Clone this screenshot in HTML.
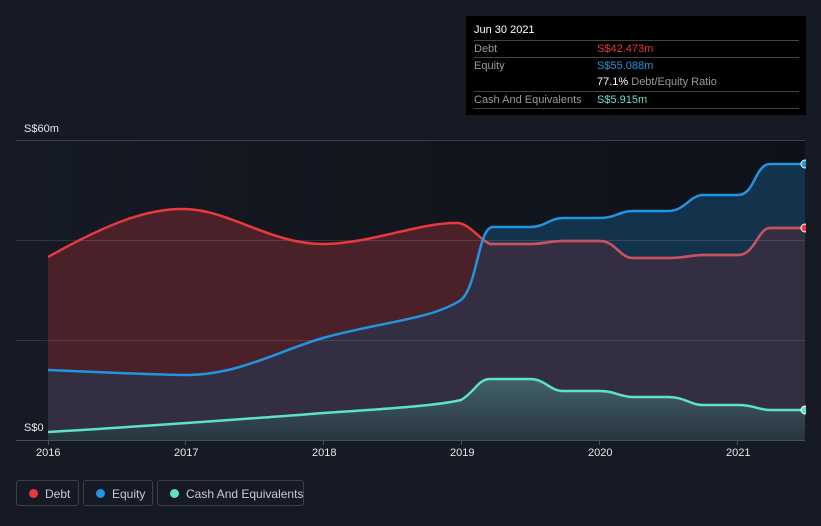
<!DOCTYPE html>
<html><head><meta charset="utf-8"><style>
body{margin:0;width:821px;height:526px;background:#151a24;font-family:"Liberation Sans",sans-serif;overflow:hidden;position:relative}
.tt{position:absolute;left:466px;top:16px;width:340px;height:99px;background:#000;color:#fff;font-size:11px}
.tt .r{position:absolute;left:8px;width:325px;border-top:1px solid #444}
.lbl{color:#9a9a9a}
.leg{position:absolute;top:480px;height:26px;border:1px solid #3a3f4a;border-radius:3px;color:#c8ccd2;font-size:12px;line-height:26px;box-sizing:border-box;white-space:nowrap}
.leg i{position:absolute;left:12px;top:8px;width:9px;height:9px;border-radius:50%}
.ax{position:absolute;color:#e8e8e8;font-size:11px}
</style></head><body>
<svg width="821" height="526" style="position:absolute;left:0;top:0">
<defs>
<linearGradient id="bg" x1="0" x2="1"><stop offset="0" stop-color="#151a24"/><stop offset="1" stop-color="#0e1118"/></linearGradient>
<linearGradient id="cg" x1="0" y1="0" x2="0" y2="1"><stop offset="0" stop-color="#44626a"/><stop offset="1" stop-color="#27343e"/></linearGradient>
<clipPath id="eq"><path d="M48,370 C120,373 160,375 185,375 C240,375 280,350 323,338 C380,322 430,320 461,300 C478,285 478,227 493,227 L530,227 C545,227 550,218 563,218 L600,218 C615,218 620,211 633,211 L668,211 C685,211 690,195 703,195 L738,195 C755,195 755,164 770,164 L805,164 L805,440 L48,440Z"/></clipPath>
</defs>
<rect x="16" y="140" width="789" height="300" fill="url(#bg)"/>
<path d="M48,257 C110,222 150,208 185,209 C230,210 270,244 323,244 C370,244 420,222 458,223 C470,224 480,240 490,244 L530,244 C545,244 550,241 563,241 L600,241 C615,241 620,258 633,258 L668,258 C685,258 690,255 703,255 L738,255 C755,255 758,228 770,228 L805,228 L805,440 L48,440Z" fill="#4a2128"/>
<path d="M48,370 C120,373 160,375 185,375 C240,375 280,350 323,338 C380,322 430,320 461,300 C478,285 478,227 493,227 L530,227 C545,227 550,218 563,218 L600,218 C615,218 620,211 633,211 L668,211 C685,211 690,195 703,195 L738,195 C755,195 755,164 770,164 L805,164 L805,440 L48,440Z" fill="#13334c"/>
<g clip-path="url(#eq)"><path d="M48,257 C110,222 150,208 185,209 C230,210 270,244 323,244 C370,244 420,222 458,223 C470,224 480,240 490,244 L530,244 C545,244 550,241 563,241 L600,241 C615,241 620,258 633,258 L668,258 C685,258 690,255 703,255 L738,255 C755,255 758,228 770,228 L805,228 L805,440 L48,440Z" fill="#332e42"/></g>
<line x1="16" y1="140.5" x2="805" y2="140.5" stroke="#3c404a"/>
<line x1="16" y1="240.5" x2="805" y2="240.5" stroke="#ffffff" stroke-opacity=".12"/>
<line x1="16" y1="340.5" x2="805" y2="340.5" stroke="#ffffff" stroke-opacity=".12"/>
<path d="M48,432 C150,426 300,415 323,413 C400,408 440,405 461,400 C475,392 478,379 490,379 L530,379 C545,379 550,391 563,391 L600,391 C615,391 620,397 633,397 L668,397 C685,397 690,405 703,405 L738,405 C755,405 758,410 770,410 L805,410 L805,440 L48,440Z" fill="url(#cg)"/>
<path d="M48,257 C110,222 150,208 185,209 C230,210 270,244 323,244 C370,244 420,222 458,223 C470,224 480,240 490,244 L530,244 C545,244 550,241 563,241 L600,241 C615,241 620,258 633,258 L668,258 C685,258 690,255 703,255 L738,255 C755,255 758,228 770,228 L805,228" fill="none" stroke="#e8393f" stroke-width="2.5"/>
<g clip-path="url(#eq)"><path d="M48,257 C110,222 150,208 185,209 C230,210 270,244 323,244 C370,244 420,222 458,223 C470,224 480,240 490,244 L530,244 C545,244 550,241 563,241 L600,241 C615,241 620,258 633,258 L668,258 C685,258 690,255 703,255 L738,255 C755,255 758,228 770,228 L805,228" fill="none" stroke="#c25464" stroke-width="2.5"/></g>
<path d="M48,370 C120,373 160,375 185,375 C240,375 280,350 323,338 C380,322 430,320 461,300 C478,285 478,227 493,227 L530,227 C545,227 550,218 563,218 L600,218 C615,218 620,211 633,211 L668,211 C685,211 690,195 703,195 L738,195 C755,195 755,164 770,164 L805,164" fill="none" stroke="#2394e0" stroke-width="2.5"/>
<path d="M48,432 C150,426 300,415 323,413 C400,408 440,405 461,400 C475,392 478,379 490,379 L530,379 C545,379 550,391 563,391 L600,391 C615,391 620,397 633,397 L668,397 C685,397 690,405 703,405 L738,405 C755,405 758,410 770,410 L805,410" fill="none" stroke="#5ee0cc" stroke-width="2.5"/>
<rect x="806" y="140" width="15" height="310" fill="#151a24"/>
<circle cx="805" cy="164" r="4" fill="#2394e0" stroke="#fff" stroke-width="1"/>
<circle cx="805" cy="228" r="4" fill="#e8393f" stroke="#fff" stroke-width="1"/>
<circle cx="805" cy="410" r="4" fill="#5ee0cc" stroke="#fff" stroke-width="1"/>
<rect x="806" y="140" width="15" height="310" fill="#151a24"/>
<line x1="16" y1="440.5" x2="805" y2="440.5" stroke="#4a4f58"/>
<g stroke="#4a4f58"><line x1="48.5" y1="440" x2="48.5" y2="445"/><line x1="185.5" y1="440" x2="185.5" y2="445"/><line x1="323.5" y1="440" x2="323.5" y2="445"/><line x1="461.5" y1="440" x2="461.5" y2="445"/><line x1="599.5" y1="440" x2="599.5" y2="445"/><line x1="737.5" y1="440" x2="737.5" y2="445"/></g>
</svg>
<div class="ax" style="left:24px;top:123px">S$60m</div>
<div class="ax" style="left:24px;top:422px">S$0</div>
<div class="ax" style="left:36px;top:447px">2016</div>
<div class="ax" style="left:174px;top:447px">2017</div>
<div class="ax" style="left:312px;top:447px">2018</div>
<div class="ax" style="left:450px;top:447px">2019</div>
<div class="ax" style="left:588px;top:447px">2020</div>
<div class="ax" style="left:726px;top:447px">2021</div>
<div class="tt">
<div style="position:absolute;left:8px;top:8px">Jun 30 2021</div>
<div class="r" style="top:24px;height:16px"><span class="lbl" style="position:absolute;left:0;top:2px">Debt</span><span style="position:absolute;left:123px;top:2px;color:#e8393f">S$42.473m</span></div>
<div class="r" style="top:41px;height:34px"><span class="lbl" style="position:absolute;left:0;top:2px">Equity</span><span style="position:absolute;left:123px;top:2px;color:#2394e0">S$55.088m</span><span style="position:absolute;left:123px;top:18px">77.1% <span class="lbl">Debt/Equity Ratio</span></span></div>
<div class="r" style="top:75px;height:16px;border-bottom:1px solid #444"><span class="lbl" style="position:absolute;left:0;top:2px">Cash And Equivalents</span><span style="position:absolute;left:123px;top:2px;color:#5ee0cc">S$5.915m</span></div>
</div>
<div class="leg" style="left:16px;width:63px"><i style="background:#e8393f"></i><span style="position:absolute;left:28px">Debt</span></div>
<div class="leg" style="left:83px;width:70px"><i style="background:#2394e0"></i><span style="position:absolute;left:28px">Equity</span></div>
<div class="leg" style="left:157px;width:147px"><i style="background:#5ee0cc"></i><span style="position:absolute;left:28px">Cash And Equivalents</span></div>
</body></html>
